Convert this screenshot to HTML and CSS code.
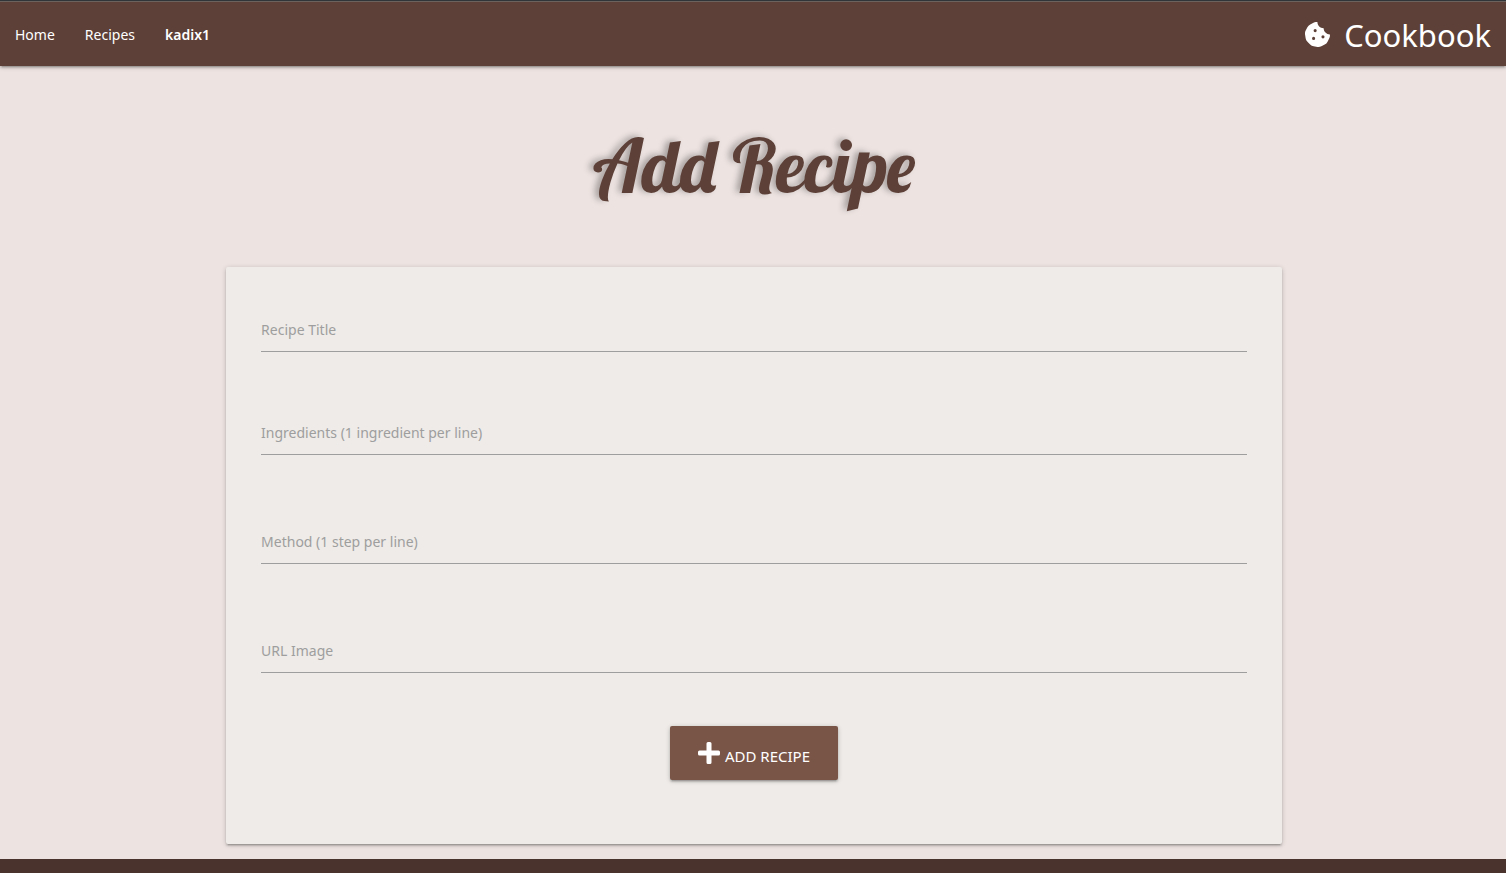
FILE: index.html
```html
<!DOCTYPE html>
<html lang="en">
<head>
<meta charset="utf-8">
<meta name="viewport" content="width=device-width, initial-scale=1">
<title>Cookbook - Add Recipe</title>
<link rel="stylesheet" href="styles.css">
</head>
<body>
<header class="navbar">
  <nav class="nav-links">
    <a href="#">Home</a>
    <a href="#">Recipes</a>
    <a href="#" class="user">kadix1</a>
  </nav>
  <a href="#" class="brand">
    <svg class="brand-icon" viewBox="0 0 512 512" aria-hidden="true"><path fill="currentColor" fill-rule="evenodd" d="M510 256c-70-1-127-57-128-127-71-1-127-58-128-128-28-4-56 0-81 13l-66 35a132 132 0 0 0-58 58l-35 69a132 132 0 0 0-13 81l12 76a132 132 0 0 0 37 73l55 55a132 132 0 0 0 73 37l77 12c27 4 55 0 80-13l69-35a132 132 0 0 0 58-58l35-69c12-24 17-52 13-79zM176 368a32 32 0 1 1 0-64 32 32 0 0 1 0 64zm32-160a32 32 0 1 1 0-64 32 32 0 0 1 0 64zm160 128a32 32 0 1 1 0-64 32 32 0 0 1 0 64z"/></svg>
    <span>Cookbook</span>
  </a>
</header>
<main class="page">
  <h1 class="title">Add Recipe</h1>
  <form class="card">
    <div class="field field-title">
      <label for="recipe-title">Recipe Title</label>
      <input id="recipe-title" type="text">
    </div>
    <div class="field">
      <label for="ingredients">Ingredients (1 ingredient per line)</label>
      <textarea id="ingredients" rows="1"></textarea>
    </div>
    <div class="field">
      <label for="method">Method (1 step per line)</label>
      <textarea id="method" rows="1"></textarea>
    </div>
    <div class="field field-image">
      <label for="image">URL Image</label>
      <input id="image" type="text">
    </div>
    <button class="submit" type="submit">
      <svg class="plus" viewBox="0 0 22 22" aria-hidden="true"><path fill="currentColor" d="M10 0h2a1.500 1.500 0 0 1 1.500 1.500v7H20.500a1.500 1.500 0 0 1 1.500 1.500v2a1.500 1.500 0 0 1-1.500 1.500h-7v7A1.500 1.500 0 0 1 12 22h-2a1.500 1.500 0 0 1-1.500-1.500v-7h-7A1.500 1.500 0 0 1 0 12v-2a1.500 1.500 0 0 1 1.500-1.500h7v-7A1.500 1.500 0 0 1 10 0z"/></svg>
      <span>ADD RECIPE</span>
    </button>
  </form>
</main>
<footer class="footer"></footer>
</body>
</html>
```
FILE: styles.css
```css
* {
  box-sizing: border-box;
}

body {
  display: flex;
  flex-direction: column;
  min-height: 100vh;
  margin: 0;
  background: #ede4e2;
  font: 14px/20px "Segoe UI", "Noto Sans", "Open Sans", sans-serif;
}

.navbar {
  display: flex;
  align-items: center;
  justify-content: space-between;
  height: 66px;
  padding: 2px 15px 0;
  border-top: 1px solid #303539;
  background: #5d4037;
  box-shadow: inset 0 1px #6b625e, 0 2px 2px rgba(0, 0, 0, .14), 0 3px 1px -2px rgba(0, 0, 0, .12), 0 1px 5px rgba(0, 0, 0, .2);
}

.navbar a {
  color: #fff;
  text-decoration: none;
}

.nav-links {
  display: flex;
  gap: 30px;
}

.navbar .user {
  font-weight: 600;
}

.brand {
  display: flex;
  align-items: center;
  gap: 14px;
  font-size: 31px;
  line-height: 40px;
}

.brand-icon {
  width: 25px;
  height: 25px;
}

.page {
  flex: 1;
  padding: 54px 0 15px 2px;
}

.title {
  margin: 0 0 55px;
  color: #5d4037;
  font: 400 74px/92px Lobster, "Liberation Serif", serif;
  text-align: center;
  text-shadow: -4px -1px 6px rgba(0, 0, 0, .3);
}

.card {
  display: flex;
  flex-direction: column;
  width: calc(70% + 3px);
  margin: 0 auto;
  padding: 40px 35px 64px;
  border-radius: 2px;
  background: #eeebe8;
  box-shadow: 0 2px 2px rgba(0, 0, 0, .14), 0 3px 1px -2px rgba(0, 0, 0, .12), 0 1px 5px rgba(0, 0, 0, .2);
}

.field {
  display: grid;
  margin-bottom: 64px;
}

.field-title {
  margin-bottom: 58px;
}

.field-image {
  margin-bottom: 53px;
}

.field label,
.field input,
.field textarea {
  grid-area: 1 / 1;
}

.field label {
  align-self: center;
  color: #9e9e9e;
  pointer-events: none;
}

.field input,
.field textarea {
  width: 100%;
  height: 45px;
  padding: 10px 0;
  border: 0;
  border-bottom: 1px solid #9e9e9e;
  border-radius: 0;
  outline: 0;
  background: transparent;
  font: inherit;
  resize: none;
}

.submit {
  display: flex;
  align-items: center;
  align-self: center;
  gap: 5px;
  height: 54px;
  padding: 0 28px;
  border: 0;
  border-radius: 2px;
  background: #795548;
  box-shadow: 0 2px 2px rgba(0, 0, 0, .14), 0 3px 1px -2px rgba(0, 0, 0, .12), 0 1px 5px rgba(0, 0, 0, .2);
  color: #fff;
  font: inherit;
  font-size: 15px;
}

.submit span {
  padding-top: 6px;
}

.plus {
  width: 22px;
  height: 22px;
}

.footer {
  height: 14px;
  background: #4b332d;
}
```
